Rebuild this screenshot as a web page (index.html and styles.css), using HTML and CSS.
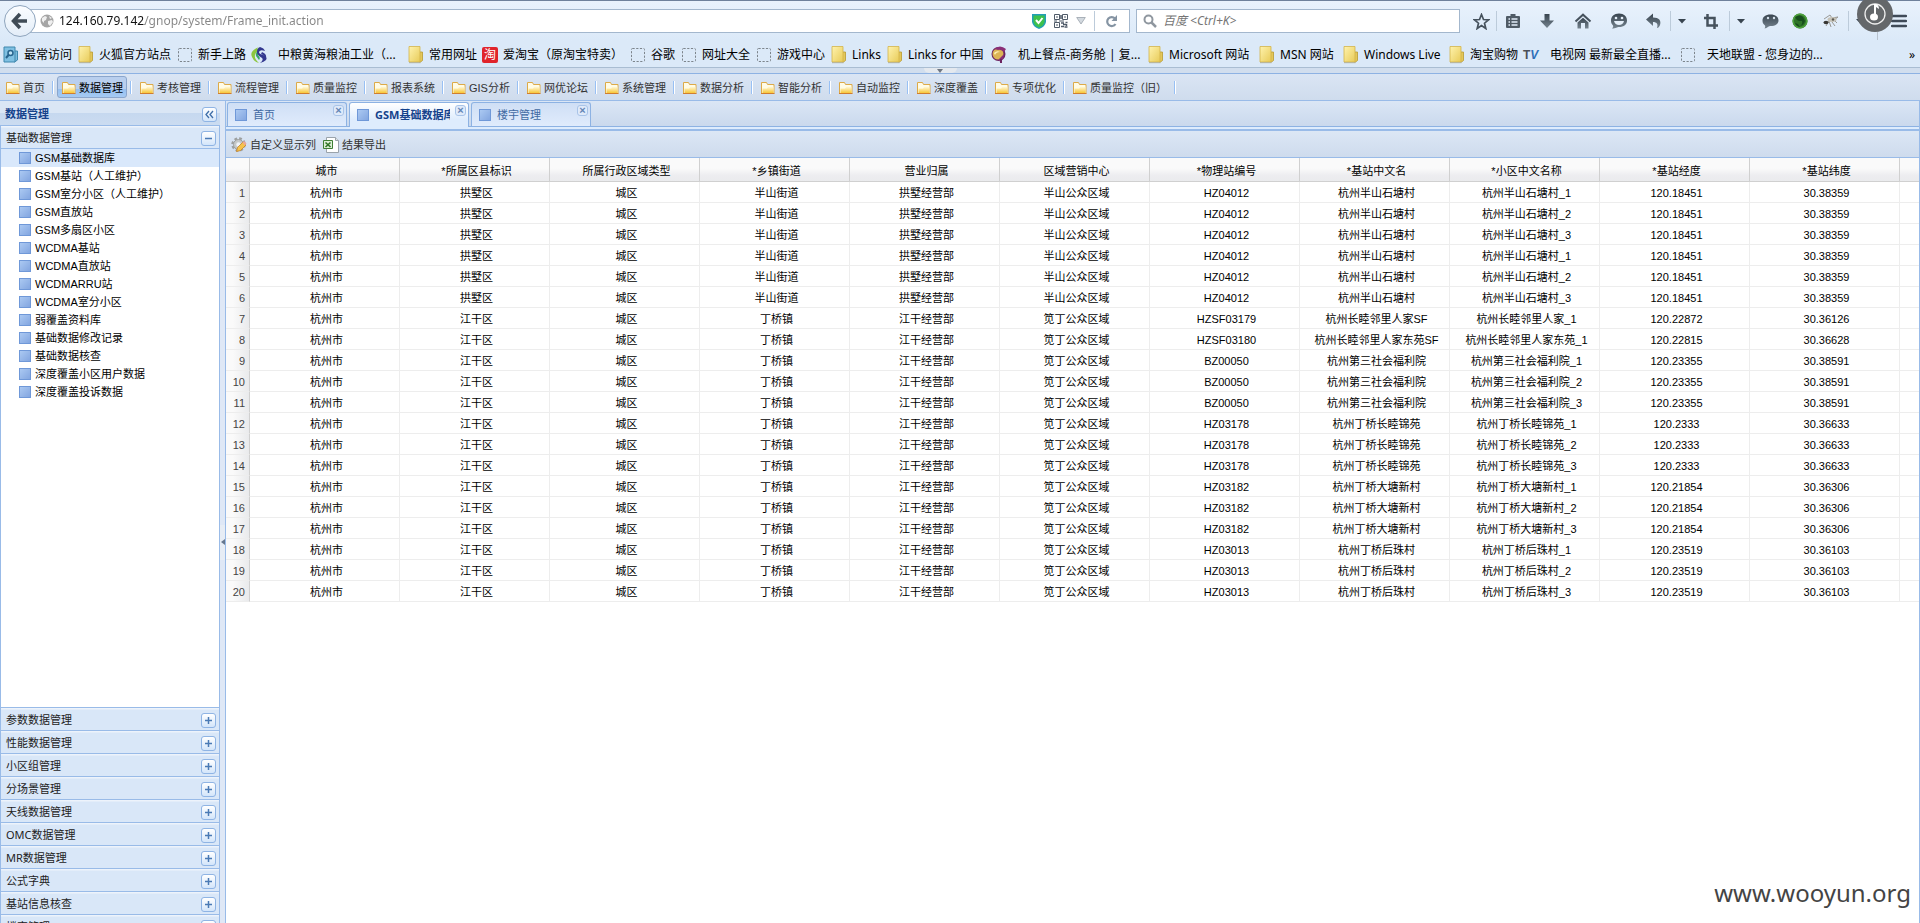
FILE: index.html
```html
<!DOCTYPE html>
<html lang="zh-CN">
<head>
<meta charset="utf-8">
<title>数据管理</title>
<link rel="stylesheet" href="styles.css">
</head>
<body>
<svg class="defs" aria-hidden="true">
  <defs>
    <linearGradient id="gold" x1="0" y1="0" x2="1" y2="1"><stop offset="0" stop-color="#fff3ae"/><stop offset="1" stop-color="#e8cb58"/></linearGradient>
    <linearGradient id="amber" x1="0" y1="0" x2="0" y2="1"><stop offset="0" stop-color="#fffbe0"/><stop offset="1" stop-color="#f8c636"/></linearGradient>
    <linearGradient id="slate" x1="0" y1="0" x2="0" y2="1"><stop offset="0" stop-color="#38444f"/><stop offset="1" stop-color="#76848f"/></linearGradient>
    <symbol id="book" viewBox="0 0 16 18"><path d="M11.500 6h3v8.500l-2 1.500h-1z" fill="#e3c75a" stroke="#b99a30" stroke-width=".8"/><path d="M1 .5h11v15.500h-11z" fill="url(#gold)" stroke="#d3b44a" stroke-width=".8"/><path d="M1 16.700h11.500" stroke="#a9a48c" stroke-width=".8"/></symbol>
    <symbol id="blank" viewBox="0 0 16 16"><rect x="1.500" y="1.500" width="13" height="13" rx="1" fill="none" stroke="#7d858c" stroke-dasharray="2.200 1.500"/></symbol>
    <symbol id="folder" viewBox="0 0 16 16"><path d="M1.500 13.500v-11h5l1 2h6.500v9z" fill="#fffbe6" stroke="#ddaa48"/><path d="M2.500 13v-4.500h4.500l1.500-2h5v6.500z" fill="url(#amber)"/><path d="M1 13.500h13.500" stroke="#d07d2f"/></symbol>
    <symbol id="caret" viewBox="0 0 8 5"><path d="M0 0h8l-4 4.500z" fill="#38444f"/></symbol>
  </defs>
</svg>

<header class="browser">
  <div class="nav-row">
    <button class="back" aria-label="后退"><svg width="20" height="18" viewBox="0 0 20 18"><path d="M10 2L3.500 9l6.500 7M4 9H17" fill="none" stroke="#3f4b56" stroke-width="3.500"/></svg></button>
    <div class="address">
      <svg width="14" height="14" viewBox="0 0 14 14"><circle cx="7" cy="7" r="6.500" fill="#a5a5a5"/><path d="M2 4l3-2 2 1-1 3-2 1v2L2 7zM8 7l4-1 1 2-3 4-2-2zM9 2l3 2-2 1z" fill="#efefef"/></svg>
      <input class="url" aria-label="地址" value="124.160.79.142/gnop/system/Frame_init.action">
      <svg width="14" height="16" viewBox="0 0 14 16"><path d="M0 1h14v8q-1 5-7 7Q1 14 0 9z" fill="#239fb5"/><path d="M1.500 2.500h11V9q-1 4-5.500 5.500Q2.500 13 1.500 9z" fill="#3dc14c"/><path d="M4 7l2.500 3L10.500 5" fill="none" stroke="#fff" stroke-width="2"/></svg>
      <svg width="14" height="14" viewBox="0 0 14 14" fill="none" stroke="#4f5a68"><path d="M.5.5h5v5h-5zM8.500.5h5v5h-5zM.5 8.500h5v5h-5zM2 3h2M10 3h2M2 11h2M0 7h3M5 7h5"/><path d="M7 9h3M11.500 8.500h2M9 10.500h3M7 12.500h3M10.500 13h3M7 1v4M12.500 10v2" stroke-width="1.500"/></svg>
      <svg width="10" height="8" viewBox="0 0 10 8"><path d="M.7.5h8.600L5 7z" fill="#d3d9df" stroke="#a9b1b9"/></svg>
      <span class="rule"></span>
      <svg class="reload" width="13" height="13" viewBox="0 0 13 13"><path d="M10.500 9a4.500 4.500 0 1 1-.5-5.500" fill="none" stroke="#8594a3" stroke-width="2.200"/><path d="M12 0v6H6.500z" fill="#8594a3"/></svg>
    </div>
    <div class="search">
      <svg width="15" height="14" viewBox="0 0 15 14"><circle cx="5.500" cy="5.500" r="4" fill="none" stroke="#8f979f" stroke-width="2"/><path d="M8.500 8.500l4.500 4.500" stroke="#8f979f" stroke-width="2.500"/></svg>
      <input class="query" aria-label="搜索" placeholder="百度 &lt;Ctrl+K&gt;">
    </div>
    <div class="tools">
      <button aria-label="收藏"><svg width="17" height="17" viewBox="0 0 17 17"><path d="M8.500 1.500l2 5 5 .3-4 3.400 1.300 5.300-4.300-3-4.300 3 1.300-5.300-4-3.400 5-.3z" fill="none" stroke="#46525d" stroke-width="1.700"/></svg></button>
      <span class="rule"></span>
      <button aria-label="书签"><svg width="16" height="16" viewBox="0 0 16 16"><path d="M2 3h3.500V1h5v2H14q1 0 1 1v10q0 1-1 1H2q-1 0-1-1V4q0-1 1-1z" fill="#4f5b66"/><path d="M3.500 6h1.500M6.500 6h6M3.500 9h1.500M6.500 9h6M3.500 12h1.500M6.500 12h6" stroke="#e3eefa" stroke-width="1.500"/></svg></button>
      <button aria-label="下载"><svg width="16" height="16" viewBox="0 0 16 16"><path d="M5.500 1h5v6.500h4.500L8 15 1 7.500h4.500z" fill="url(#slate)"/></svg></button>
      <button aria-label="主页"><svg width="18" height="16" viewBox="0 0 18 16"><path d="M1.500 8.500L9 1.700l7.500 6.800" fill="none" stroke="#46525d" stroke-width="2"/><path d="M3.500 9.500L9 4.700l5.500 4.800v6H11V10H7v5.500H3.500z" fill="url(#slate)"/></svg></button>
      <button aria-label="聊天"><svg width="18" height="16" viewBox="0 0 18 16"><path d="M9 .5c5 0 8 3 8 7s-3 6.500-8 6.500c-2 0-3 1.500-7 1.500 1-1 1.500-2 1-3C1.500 11 1 9.500 1 7.500c0-4 3-7 8-7z" fill="url(#slate)"/><circle cx="6" cy="5" r="1.300" fill="#e6f0fa"/><circle cx="12" cy="5" r="1.300" fill="#e6f0fa"/><path d="M4 8h10q-1 4-5 4T4 8z" fill="#e6f0fa"/></svg></button>
      <button class="undo" aria-label="撤销"><svg width="16" height="16" viewBox="0 0 16 16"><path d="M0 6.500L7 .5v4c6 0 8.500 3 7 7.500-.5 1.500-1.500 3-3 3 1.500-4-.5-6-4-6v4z" fill="url(#slate)"/></svg></button>
      <span class="rule"></span>
      <button class="drop" aria-label="撤销菜单"><svg width="8" height="5"><use href="#caret"/></svg></button>
      <button aria-label="截图"><svg width="14" height="15" viewBox="0 0 14 15"><path d="M3.500 0v11.500H14M0 4h10.500v11" fill="none" stroke="#46525d" stroke-width="2.500"/></svg></button>
      <span class="rule"></span>
      <button class="drop" aria-label="截图菜单"><svg width="8" height="5"><use href="#caret"/></svg></button>
      <button aria-label="消息"><svg width="17" height="15" viewBox="0 0 17 15"><path d="M8.500.5c5 0 8 2.500 8 6s-3 5.500-8 5.500c-2 0-3 2-6 2.500.6-1 1-2 .5-3C1 10 .5 8.500.5 6.500c0-3.500 3-6 8-6z" fill="url(#slate)"/><circle cx="6" cy="4" r="1.200" fill="#d5e1ec"/><circle cx="12" cy="4" r="1.200" fill="#d5e1ec"/></svg></button>
      <button class="slim" aria-label="扩展"><svg width="16" height="16" viewBox="0 0 16 16"><circle cx="8" cy="8" r="7.500" fill="#2f7428"/><circle cx="8" cy="8" r="6.800" fill="none" stroke="#4ca03c" stroke-width="1.500"/><path d="M3 4q5-3 8 0l2 4q-1 4-5 5 3-2 2-5H7L5 7zM3 10l3 1 2 3q-4-1-5-4z" fill="#174e1d"/></svg></button>
      <button aria-label="调试"><svg width="17" height="14" viewBox="0 0 17 14"><path d="M2 5l6-4 2 3 6-1-4 3 3 3M4 12l3-5 2 6M10 8l3 4" fill="none" stroke="#999894" stroke-width="1"/><ellipse cx="10" cy="5.500" rx="4.500" ry="2.500" fill="#c5c2b7"/><ellipse cx="4" cy="8.500" rx="2.500" ry="1.800" fill="#383733"/><circle cx="11" cy="5.500" r="1.200" fill="#5b5953"/></svg></button>
      <span class="rule"></span>
      <button class="drop" aria-label="更多"><svg width="8" height="5"><use href="#caret"/></svg></button>
      <button class="menu" aria-label="菜单"><svg width="16" height="14" viewBox="0 0 16 14"><path d="M1 2h14M1 7h14M1 12h14" stroke="#3f4a58" stroke-width="2.500" stroke-linecap="round"/></svg></button>
      <span class="music"><svg width="36" height="40" viewBox="0 0 36 40"><circle cx="18" cy="14" r="18" fill="#64676a"/><circle cx="18" cy="14" r="10" fill="none" stroke="#eee" stroke-width="1.300"/><path d="M17 17V4l2 0q3 1 3 5l-3-2v10z" fill="#fff"/><ellipse cx="17" cy="17" rx="4" ry="3.500" fill="#fff"/><path d="M20.500 32v8" stroke="#b8c2cd"/></svg></span>
    </div>
  </div>
  <nav class="bookmarks">
    <a href="#"><svg width="16" height="18" viewBox="0 0 16 18"><path d="M11.500 5h3v9l-3 2z" fill="#7bbbdc" stroke="#3f87ad"/><path d="M1 1h11v15H1z" fill="#7fc0e2" stroke="#3f87ad"/><circle cx="7.500" cy="7" r="2.500" fill="#bfe3f5" stroke="#27648e" stroke-width="1.500"/><path d="M5.500 9L3 12" stroke="#27648e" stroke-width="2"/></svg><span>最常访问</span></a>
    <a href="#"><svg width="16" height="18"><use href="#book"/></svg><span>火狐官方站点</span></a>
    <a href="#"><svg width="16" height="16"><use href="#blank"/></svg><span>新手上路</span></a>
    <a href="#" class="roomy"><svg width="16" height="16" viewBox="0 0 16 16"><path d="M8 0Q-2 4 1 10q2 5 7 6-5-4-4-8t6-5Q4 2 8 0z" fill="#8cc63f"/><path d="M9 2Q4 5 5 9l3 4q2-2-1-5 0-3 2-6z" fill="#3aa56a"/><path d="M9 0q4 1 5 4-5-2-6 1 0 2 4 3 5 2 3 5-2 2-6 3 4-3 2-5-5-3-5-6 0-4 3-5zM11 5q5 2 4 6-1-3-5-4z" fill="#33388f"/></svg><span>中粮黄海粮油工业（...</span></a>
    <a href="#"><svg width="16" height="18"><use href="#book"/></svg><span>常用网址</span></a>
    <a href="#"><span class="tao">淘</span><span>爱淘宝（原淘宝特卖）</span></a>
    <a href="#"><svg width="16" height="16"><use href="#blank"/></svg><span>谷歌</span></a>
    <a href="#"><svg width="16" height="16"><use href="#blank"/></svg><span>网址大全</span></a>
    <a href="#"><svg width="16" height="16"><use href="#blank"/></svg><span>游戏中心</span></a>
    <a href="#"><svg width="16" height="18"><use href="#book"/></svg><span>Links</span></a>
    <a href="#"><svg width="16" height="18"><use href="#book"/></svg><span>Links for 中国</span></a>
    <a href="#" class="roomy"><svg width="16" height="18" viewBox="0 0 16 18"><circle cx="7.500" cy="8" r="7" fill="#6b2460"/><circle cx="7" cy="8" r="5.500" fill="#dcb455"/><path d="M3 3q6-5 12 0l-2 3q-4-3-6-2zM8 13l5-5q0 5-4 8z" fill="#8a2f77"/><path d="M3 7q3-3 6-1-4 0-5 3z" fill="#fff2b5"/><path d="M10 13v4" stroke="#6b2460" stroke-width="2"/></svg><span>机上餐点-商务舱 | 复...</span></a>
    <a href="#"><svg width="16" height="18"><use href="#book"/></svg><span>Microsoft 网站</span></a>
    <a href="#"><svg width="16" height="18"><use href="#book"/></svg><span>MSN 网站</span></a>
    <a href="#"><svg width="16" height="18"><use href="#book"/></svg><span>Windows Live</span></a>
    <a href="#"><svg width="16" height="18"><use href="#book"/></svg><span>淘宝购物</span></a>
    <a href="#" class="roomy"><b class="tv">T<i>V</i></b><span>电视网 最新最全直播...</span></a>
    <a href="#" class="roomy"><svg width="16" height="16"><use href="#blank"/></svg><span>天地联盟 - 您身边的...</span></a>
    <button class="overflow" aria-label="更多书签">»</button>
  </nav>
</header>

<div class="strip"><button class="grip" aria-label="收起"><svg width="6" height="4" viewBox="0 0 6 4"><path d="M0 0h6L3 4z" fill="#6e7681"/></svg></button></div>
<nav class="menubar" id="menubar"></nav>

<div class="workspace">
  <aside class="sidebar">
    <div class="side-title"><h2>数据管理</h2><button class="tool" aria-label="收起面板"><svg width="15" height="15" viewBox="0 0 15 15"><path d="M7 4L4 7.500 7 11M11 4L8 7.500 11 11" fill="none" stroke="#3f6ea8" stroke-width="1.300"/></svg></button></div>
    <div class="side-body">
      <div class="group first"><span>基础数据管理</span><button class="tool" aria-label="收起"><svg width="15" height="15" viewBox="0 0 15 15"><path d="M4 7.500h7" stroke="#4a7ab5" stroke-width="1.500"/></svg></button></div>
      <ul class="tree" id="tree"></ul>
      <div id="groups"></div>
    </div>
  </aside>
  <div class="splitter"><button class="handle" aria-label="收起侧栏"><svg width="4" height="6" viewBox="0 0 4 6"><path d="M4 0v6L0 3z" fill="#66788f"/></svg></button></div>
  <main class="content">
    <div class="tabs">
      <div class="tab"><i class="cube"></i><a href="#">首页</a><button class="close" aria-label="关闭首页"></button></div>
      <div class="tab current"><i class="cube"></i><a href="#">GSM基础数据库</a><button class="close" aria-label="关闭GSM基础数据库"></button></div>
      <div class="tab"><i class="cube"></i><a href="#">楼宇管理</a><button class="close" aria-label="关闭楼宇管理"></button></div>
    </div>
    <div class="under-tabs"></div>
    <div class="toolbar">
      <button><svg width="16" height="16" viewBox="0 0 16 16"><circle cx="7.500" cy="7.500" r="6" fill="none" stroke="#9da0a0" stroke-width="2.500" stroke-dasharray="2.700 2"/><circle cx="7.500" cy="7.500" r="5" fill="#c6c9c9" stroke="#9da0a0"/><circle cx="7.500" cy="7.500" r="2.200" fill="#eff3f8"/><path d="M5.500 14.500l1-4L12 5l3 3-5.500 5.500z" fill="#f6c34c" stroke="#c07a1c" stroke-width=".7"/><path d="M11.500 5.500L13 4l2.500 2.500-1.500 2z" fill="#eea795"/></svg><span>自定义显示列</span></button>
      <button><svg width="16" height="16" viewBox="0 0 16 16"><path d="M3.500.5h9l3 3v12h-12z" fill="#fff" stroke="#9aa3ab"/><path d="M12.500.5v3h3" fill="#dfe5ea" stroke="#9aa3ab"/><path d="M.5 3.500h9v8h-9z" fill="#dcefd6" stroke="#3f7f35"/><path d="M2.500 5.500l5 4.500M7.500 5.500l-5 4.500" stroke="#2f7426" stroke-width="1.600"/></svg><span>结果导出</span></button>
    </div>
    <table class="grid">
      <colgroup><col class="num"><col class="c"><col class="c"><col class="c"><col class="c"><col class="c"><col class="c"><col class="c"><col class="c"><col class="c"><col class="c"><col class="c"><col></colgroup>
      <thead><tr><th></th><th>城市</th><th>*所属区县标识</th><th>所属行政区域类型</th><th>*乡镇街道</th><th>营业归属</th><th>区域营销中心</th><th>*物理站编号</th><th>*基站中文名</th><th>*小区中文名称</th><th>*基站经度</th><th>*基站纬度</th><th></th></tr></thead>
      <tbody id="rows"></tbody>
    </table>
    <div class="watermark">www.wooyun.org</div>
  </main>
</div>
<script src="app.js"></script>
</body>
</html>
```

FILE: styles.css
```css
* { box-sizing: border-box; }
html, body { height: 100%; }
body {
  margin: 0;
  display: flex;
  flex-direction: column;
  overflow: hidden;
  background: #dfe8f6;
  font: 11px/16px "Liberation Sans", "Noto Sans CJK SC", sans-serif;
  color: #000;
}
button { border: 0; padding: 0; background: none; font: inherit; color: inherit; display: flex; align-items: center; justify-content: center; }
input { border: 0; padding: 0; outline: 0; background: none; min-width: 0; }
a { color: inherit; text-decoration: none; }
svg { flex: none; display: block; }
.defs { position: absolute; width: 0; height: 0; }

/* browser chrome */
.browser {
  flex: none;
  border-top: 1px solid #6f819b;
  border-bottom: 1px solid #a9bdd2;
  background: linear-gradient(#e9f2fc, #dbe9f8 60%);
  font-family: "Noto Sans", "Noto Sans CJK SC", sans-serif;
}
.nav-row { display: flex; height: 40px; align-items: center; padding-left: 4px; }
.back { flex: none; width: 32px; height: 32px; border: 1px solid #8fa5bd; border-radius: 50%; background: linear-gradient(#fbfdff, #e3edf8); z-index: 1; }
.address, .search { display: flex; align-items: center; height: 24px; border: 1px solid #a3b7cd; background: #fff; }
.address { flex: 1; margin-left: -8px; padding: 0 11px; gap: 8px; }
.url {
  flex: 1;
  margin-left: -3px;
  font: 12px/20px "Noto Sans", sans-serif;
  background: linear-gradient(90deg, #111 86px, #858585 86px);
  -webkit-background-clip: text;
  background-clip: text;
  color: transparent;
}
.rule { width: 1px; height: 20px; background: #bccbda; flex: none; }
.reload { margin-left: 2px; }
.search { width: 324px; margin-left: 6px; padding-left: 6px; gap: 5px; }
.query { flex: 1; font: italic 12px/20px "Noto Sans", "Noto Sans CJK SC", sans-serif; }
.query::placeholder { color: #757575; opacity: 1; }
.tools { position: relative; display: flex; align-items: center; padding-left: 6px; width: 460px; }
.tools button { width: 36px; height: 24px; flex: none; }
.tools button:first-child { width: 30px; }
.tools button:nth-of-type(2) { width: 32px; }
.tools .undo { width: 33px; }
.tools .drop { width: 22px; }
.tools .slim { width: 24px; }
.tools .menu { margin-left: 10px; }
.music { position: absolute; left: 397px; top: -9px; }
.bookmarks {
  display: grid;
  grid-template-columns: 75px 99px 74px 157px 74px 148px 51px 75px 75px 56px 104px 157px 111px 84px 106px 74px 157px 1fr auto;
  height: 26px;
  align-items: center;
  padding: 1px 5px 0 3px;
  font-size: 12px;
}
.bookmarks a { display: flex; align-items: center; gap: 5px; white-space: nowrap; }
.bookmarks .roomy { gap: 11px; }
.tao { width: 16px; height: 16px; background: #e0242b; color: #fff; border-radius: 2px; text-align: center; line-height: 16px; }
.tv { width: 16px; font: bold 12px/16px "Liberation Sans", sans-serif; color: #4b5058; }
.tv i { color: #2e6fb8; }

/* application menu */
.strip { flex: none; height: 5px; background: #d1deee; display: flex; justify-content: center; }
.grip { width: 33px; height: 5px; background: #e4e9ef; margin-right: 40px; border-radius: 0 0 6px 6px; }
.menubar {
  flex: none;
  display: flex;
  align-items: center;
  height: 28px;
  padding-left: 1px;
  border-top: 1px solid #8db2e3;
  border-bottom: 1px solid #99bbe8;
  background: linear-gradient(#dae5f4, #cfdced);
  color: #333;
}
.menubar button { height: 22px; padding: 1px 3px 0; border: 1px solid transparent; border-radius: 3px; gap: 2px; }
.menubar button.on { border-color: #8ba6cc; background: linear-gradient(#b9cfee 60%, #96c0f0 60%, #a5caf3); color: #000; }
.menubar hr { width: 2px; height: 13px; margin: 0 3px; border: 0; border-left: 1px solid #98c0f4; border-right: 1px solid #fff; }

/* sidebar */
.workspace { flex: 1; min-height: 0; display: flex; }
.sidebar { width: 220px; flex: none; display: flex; flex-direction: column; min-height: 0; }
.side-title {
  flex: none;
  display: flex;
  align-items: center;
  justify-content: space-between;
  height: 25px;
  padding: 2px 3px 0 5px;
  border-bottom: 1px solid #99bbe8;
  background: linear-gradient(#dae6f5 50%, #c6d8ef 50%, #cbdcf1);
}
.side-title h2 { margin: 0; font-size: 11px; line-height: 16px; font-weight: bold; color: #15428b; }
.side-body { flex: 1; display: flex; flex-direction: column; min-height: 0; margin-bottom: -14px; border: solid #99bbe8; border-width: 0 1px; }
.group {
  flex: none;
  display: flex;
  align-items: center;
  justify-content: space-between;
  height: 23px;
  padding: 2px 3px 0 5px;
  border-top: 1px solid #99bbe8;
  background: linear-gradient(#edf3fb 1px, #d9e7f8 2px);
  color: #222;
  font-family: "Noto Sans", "Noto Sans CJK SC", sans-serif;
}
.group.first { border-top: 0; border-bottom: 1px solid #99bbe8; }
.tool { width: 15px; height: 15px; border: 1px solid #8fb4e4; border-radius: 3px; background: linear-gradient(#fff, #d3e5fa); }
.tree { flex: 1; margin: 0; padding: 0; list-style: none; background: #fff; }
.tree a { display: flex; align-items: center; gap: 4px; height: 18px; padding-left: 18px; white-space: nowrap; }
.tree .on { background: #d9e8fb; }
.cube { width: 12px; height: 12px; flex: none; border: 1px solid #6f98d8; background: linear-gradient(135deg, #abc9f2, #83a6e0); }
.splitter { width: 5px; flex: none; display: flex; align-items: center; background: #dfe8f6; }
.handle { width: 5px; height: 35px; margin-top: 60px; background: #e7edf5; }

/* work area */
.content { position: relative; flex: 1; min-width: 0; display: flex; flex-direction: column; background: #fff; border: solid #99bbe8; border-width: 0 1px; }
.tabs { flex: none; display: flex; align-items: flex-end; gap: 2px; height: 26px; padding-left: 1px; border-bottom: 1px solid #8db2e3; background: linear-gradient(#dbe6f5, #cad9ed); }
.tab { position: relative; display: flex; align-items: center; gap: 6px; width: 120px; height: 24px; padding: 0 18px 0 7px; border: 1px solid #8db2e3; border-bottom: 0; border-radius: 3px 3px 0 0; background: linear-gradient(#cfdff5, #e0ebfc); color: #416aa3; }
.tab a { overflow: hidden; white-space: nowrap; }
.tab.current { height: 25px; margin-bottom: -1px; background: linear-gradient(#fff, #deecfd 70%); color: #15428b; font-weight: bold; font-family: "Noto Sans", "Noto Sans CJK SC", sans-serif; }
.close { position: absolute; top: 2px; right: 2px; width: 11px; height: 11px; border: 1px solid #a9c4e8; border-radius: 3px; background: #dfeafa; }
.close::before { content: "×"; font: bold 11px/9px "Liberation Sans", sans-serif; color: #6385b5; }
.under-tabs { flex: none; height: 4px; background: #deecfd; border-bottom: 2px solid #99bbe8; }
.toolbar { flex: none; display: flex; align-items: center; gap: 7px; height: 27px; padding: 1px 0 0 5px; border-bottom: 1px solid #99bbe8; background: linear-gradient(#dce7f5, #cedbed); color: #333; }
.toolbar button { gap: 3px; }
.grid { width: 100%; table-layout: fixed; border-collapse: separate; border-spacing: 0; }
.grid .num { width: 24px; }
.grid .c { width: 150px; }
.grid th, .grid td { padding: 2px 0 0 4px; text-align: center; white-space: nowrap; overflow: hidden; font-weight: normal; border-right: 1px solid #ededed; }
.grid thead th { height: 24px; border-right-color: #d0d0d0; border-bottom: 1px solid #d0d0d0; background: linear-gradient(#fafafa 45%, #ededf0 75%, #eaebed); }
.grid td, .grid tbody th { height: 21px; border-bottom: 1px solid #ededed; }
.grid tbody th { padding: 2px 4px 0 0; text-align: right; color: #444; border-right-color: #d0d0d0; background: linear-gradient(90deg, #fafafa 30%, #e9eaec); }
.grid tr > :last-child { border-right: 0; }
.watermark { position: absolute; right: 8px; bottom: 12px; font: 24px/36px "Noto Sans", sans-serif; color: #444; }
```

FILE: app.js
```js
const $ = (id) => document.getElementById(id);

const menus = ["首页", "数据管理", "考核管理", "流程管理", "质量监控", "报表系统", "GIS分析", "网优论坛", "系统管理", "数据分析", "智能分析", "自动监控", "深度覆盖", "专项优化", "质量监控（旧）"];
$("menubar").innerHTML = menus.map((m, i) =>
  `<button${i === 1 ? ' class="on"' : ""}><svg width="16" height="16"><use href="#folder"/></svg><span>${m}</span></button><hr>`).join("");

const leaves = ["GSM基础数据库", "GSM基站（人工维护）", "GSM室分小区（人工维护）", "GSM直放站", "GSM多扇区小区", "WCDMA基站", "WCDMA直放站", "WCDMARRU站", "WCDMA室分小区", "弱覆盖资料库", "基础数据修改记录", "基础数据核查", "深度覆盖小区用户数据", "深度覆盖投诉数据"];
$("tree").innerHTML = leaves.map((t, i) =>
  `<li${i === 0 ? ' class="on"' : ""}><a href="#"><i class="cube"></i>${t}</a></li>`).join("");

const groups = ["参数数据管理", "性能数据管理", "小区组管理", "分场景管理", "天线数据管理", "OMC数据管理", "MR数据管理", "公式字典", "基站信息核查", "楼宇管理"];
$("groups").innerHTML = groups.map((t) =>
  `<div class="group"><span>${t}</span><button class="tool" aria-label="展开${t}"><svg width="15" height="15" viewBox="0 0 15 15"><path d="M4 7.500h7M7.500 4v7" stroke="#4a7ab5" stroke-width="1.500"/></svg></button></div>`).join("");

const north = ["杭州市", "拱墅区", "城区", "半山街道", "拱墅经营部", "半山公众区域"];
const east = ["杭州市", "江干区", "城区", "丁桥镇", "江干经营部", "笕丁公众区域"];
// area, station code, station name, cell name, cell suffixes, longitude, latitude
const stations = [
  [north, "HZ04012", "杭州半山石塘村", "杭州半山石塘村", [1, 2, 3, 1, 2, 3], "120.18451", "30.38359"],
  [east, "HZSF03179", "杭州长睦邻里人家SF", "杭州长睦邻里人家", [1], "120.22872", "30.36126"],
  [east, "HZSF03180", "杭州长睦邻里人家东苑SF", "杭州长睦邻里人家东苑", [1], "120.22815", "30.36628"],
  [east, "BZ00050", "杭州第三社会福利院", "杭州第三社会福利院", [1, 2, 3], "120.23355", "30.38591"],
  [east, "HZ03178", "杭州丁桥长睦锦苑", "杭州丁桥长睦锦苑", [1, 2, 3], "120.2333", "30.36633"],
  [east, "HZ03182", "杭州丁桥大塘新村", "杭州丁桥大塘新村", [1, 2, 3], "120.21854", "30.36306"],
  [east, "HZ03013", "杭州丁桥后珠村", "杭州丁桥后珠村", [1, 2, 3], "120.23519", "30.36103"],
];
const records = stations.flatMap(([area, code, name, cell, suffixes, lon, lat]) =>
  suffixes.map((n) => [...area, code, name, `${cell}_${n}`, lon, lat]));
$("rows").innerHTML = records.map((r, i) =>
  `<tr><th scope="row">${i + 1}</th>${r.map((v) => `<td>${v}</td>`).join("")}<td></td></tr>`).join("");
```
